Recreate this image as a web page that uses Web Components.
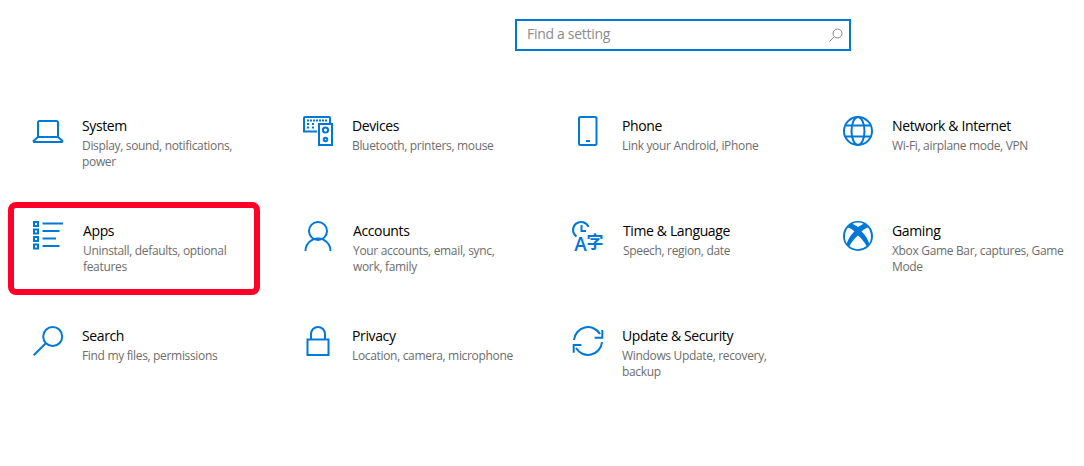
<!DOCTYPE html>
<html lang="en">
<head>
<meta charset="utf-8">
<title>Settings</title>
<style>
  html, body { margin: 0; background: #fff; }
  body { font-family: "Open Sans", "Liberation Sans", sans-serif; }
</style>
</head>
<body>
<settings-page>
  <settings-search slot="search" placeholder="Find a setting"></settings-search>

  <settings-tile name="System" info="Display, sound, notifications,&#10;power">
    <svg viewBox="0 0 30 30" fill="none" stroke="currentColor" stroke-width="2">
      <path d="M5 21V6.500a1.500 1.500 0 0 1 1.500-1.500h17a1.500 1.500 0 0 1 1.500 1.500V21"/>
      <path d="M5 21h20l4 3.500a.8.800 0 0 1-.5 1.500h-27a.8.800 0 0 1-.5-1.500z"/>
    </svg>
  </settings-tile>

  <settings-tile name="Devices" info="Bluetooth, printers, mouse">
    <svg viewBox="0 0 30 30" fill="none" stroke="currentColor" stroke-width="2">
      <path d="M14 15.500H1V2a1 1 0 0 1 1-1h24a1 1 0 0 1 1 1v5"/>
      <path d="M4 4.500h20M4 8h3m2 0h3M4 11.500h3m2 0h3" stroke-dasharray="2 1"/>
      <rect x="16" y="8" width="13" height="21"/>
      <circle cx="22.500" cy="14" r="2.600"/>
      <circle cx="22.500" cy="23.500" r="1.800"/>
    </svg>
  </settings-tile>

  <settings-tile name="Phone" info="Link your Android, iPhone">
    <svg viewBox="0 0 30 30" fill="none" stroke="currentColor" stroke-width="2">
      <rect x="6" y="1" width="17.500" height="28" rx="1.500"/>
      <path d="M13 25h4"/>
    </svg>
  </settings-tile>

  <settings-tile name="Network &amp; Internet" info="Wi-Fi, airplane mode, VPN">
    <svg viewBox="0 0 30 30" fill="none" stroke="currentColor" stroke-width="2">
      <circle cx="15" cy="15" r="14"/>
      <ellipse cx="15" cy="15" rx="6.500" ry="14"/>
      <path d="M3 9.500h24M3 20.500h24"/>
    </svg>
  </settings-tile>

  <settings-tile name="Apps" info="Uninstall, defaults, optional&#10;features" style="--gap: 20px">
    <svg viewBox="0 0 30 30" fill="none" stroke="currentColor" stroke-width="2">
      <path d="M9.500 2.500H30M9.500 10H26.500M9.500 17.500H23M9.500 25H26.500"/>
      <g fill="currentColor" stroke="none">
        <path fill-rule="evenodd" d="M0 0h6v6H0zM2 2v2h2V2z"/>
        <path fill-rule="evenodd" d="M0 7.500h6v6H0zM2 9.500v2h2v-2z"/>
        <path fill-rule="evenodd" d="M0 15h6v6H0zM2 17v2h2v-2z"/>
        <path fill-rule="evenodd" d="M0 22.500h6v6H0zM2 24.500v2h2v-2z"/>
      </g>
    </svg>
  </settings-tile>

  <settings-tile name="Accounts" info="Your accounts, email, sync,&#10;work, family" style="--gap: 20px">
    <svg viewBox="0 0 30 30" fill="none" stroke="currentColor" stroke-width="2">
      <circle cx="15" cy="10" r="9"/>
      <path d="M2.500 30a12.500 12.500 0 0 1 25 0"/>
    </svg>
  </settings-tile>

  <settings-tile name="Time &amp; Language" info="Speech, region, date" style="--gap: 20px">
    <svg viewBox="0 0 30 30" fill="none" stroke="currentColor" stroke-width="2">
      <path d="M3.500 15.500A8 8 0 1 1 15.500 6"/>
      <path d="M8.500 4v6H13"/>
      <text x="7.500" y="30" text-anchor="middle" fill="currentColor" stroke="none" font-family="'Open Sans', sans-serif" font-size="19" font-weight="600">A</text>
      <text x="22" y="27" text-anchor="middle" fill="currentColor" stroke="none" font-family="'Noto Sans CJK SC', sans-serif" font-size="17" font-weight="700">字</text>
    </svg>
  </settings-tile>

  <settings-tile name="Gaming" info="Xbox Game Bar, captures, Game&#10;Mode">
    <svg viewBox="0 0 30 30">
      <circle cx="15" cy="15" r="15" fill="currentColor"/>
      <g fill="#fff">
        <path d="M9.500 2.700a13 13 0 0 1 11 0L15 6z"/>
        <path d="M5 6.500C1.500 11 1 18 3.800 22.500 5 18 8 13.500 11.500 10.500 9.500 8.500 7.500 7.200 5 6.500z"/>
        <path d="M25 6.500C28.500 11 29 18 26.200 22.500 25 18 22 13.500 18.500 10.500 20.500 8.500 22.500 7.200 25 6.500z"/>
        <path d="M6.500 25C9 20.500 12 16.800 15 14.500c3 2.300 6 6 8.500 10.500a13 13 0 0 1-17 0z"/>
      </g>
    </svg>
  </settings-tile>

  <settings-tile name="Search" info="Find my files, permissions">
    <svg viewBox="0 0 30 30" fill="none" stroke="currentColor" stroke-width="2">
      <circle cx="19.700" cy="10.500" r="9.500"/>
      <path d="M12.800 17.200L.7 29.300"/>
    </svg>
  </settings-tile>

  <settings-tile name="Privacy" info="Location, camera, microphone">
    <svg viewBox="0 0 30 30" fill="none" stroke="currentColor" stroke-width="2">
      <rect x="4.500" y="13.500" width="21" height="15.500"/>
      <path d="M8 13.500V8a7 7 0 0 1 14 0v5.500"/>
    </svg>
  </settings-tile>

  <settings-tile name="Update &amp; Security" info="Windows Update, recovery,&#10;backup">
    <svg viewBox="0 0 30 30" fill="none" stroke="currentColor" stroke-width="2">
      <path d="M1 14A14 14 0 0 1 27 8"/>
      <path d="M29.300 4v7.700h-7.700"/>
      <path d="M29 16A14 14 0 0 1 3 22"/>
      <path d="M.7 26.700V19h7.700"/>
    </svg>
  </settings-tile>

  <settings-outline slot="overlay"></settings-outline>
</settings-page>

<script>
class SettingsPage extends HTMLElement {
  constructor() {
    super();
    this.attachShadow({mode: 'open'}).innerHTML = `
      <style>
        :host {
          display: block;
          position: relative;
          height: 466px;
          overflow: hidden;
          color: #000;
        }
        .top {
          display: flex;
          justify-content: flex-start;
          padding: 19px 0 0 515px;
        }
        .grid {
          display: grid;
          grid-template-columns: repeat(4, 270px);
          grid-auto-rows: 105px;
          padding: 65px 0 0 33px;
        }
      </style>
      <div class="top"><slot name="search"></slot></div>
      <div class="grid"><slot></slot></div>
      <slot name="overlay"></slot>
    `;
  }
}

class SettingsSearch extends HTMLElement {
  constructor() {
    super();
    this.attachShadow({mode: 'open'});
  }

  connectedCallback() {
    this.shadowRoot.innerHTML = `
      <style>
        :host {
          display: flex;
          align-items: center;
          justify-content: space-between;
          box-sizing: border-box;
          width: 336px;
          height: 32px;
          padding: 0 6px 0 10px;
          border: 2px solid #0078d7;
          background: #fff;
          color: #8c8c8c;
          font-size: 14px;
          letter-spacing: -0.3px;
        }
        span { padding-bottom: 4px; }
        svg { width: 14px; height: 14px; }
      </style>
      <span>${this.getAttribute('placeholder')}</span>
      <svg viewBox="0 0 14 14" fill="none" stroke="#858585" stroke-width="1">
        <circle cx="8.500" cy="5.500" r="4.500"/>
        <path d="M5.300 8.700L.5 13.500"/>
      </svg>
    `;
  }
}

class SettingsTile extends HTMLElement {
  constructor() {
    super();
    this.attachShadow({mode: 'open'});
  }

  connectedCallback() {
    this.shadowRoot.innerHTML = `
      <style>
        :host {
          display: flex;
          gap: var(--gap, 19px);
          align-items: flex-start;
        }
        .icon {
          flex: none;
          width: 30px;
          height: 30px;
          color: #0078d7;
        }
        ::slotted(svg) { display: block; width: 30px; height: 30px; overflow: visible; }
        .text { width: 180px; }
        .name {
          font-size: 14px;
          line-height: 20px;
          letter-spacing: -0.38px;
          color: #000;
        }
        .info {
          margin-top: 2px;
          font-size: 12px;
          line-height: 16px;
          letter-spacing: -0.33px;
          white-space: pre-line;
          color: #6d6d6d;
        }
      </style>
      <div class="icon"><slot></slot></div>
      <div class="text">
        <div class="name">${this.getAttribute('name').replace('&', '&amp;')}</div>
        <div class="info">${this.getAttribute('info')}</div>
      </div>
    `;
  }
}

class SettingsOutline extends HTMLElement {
  constructor() {
    super();
    this.attachShadow({mode: 'open'}).innerHTML = `
      <style>
        :host {
          position: absolute;
          left: 8px;
          top: 202px;
          box-sizing: border-box;
          width: 252px;
          height: 93px;
          border: 6px solid #ff0029;
          border-radius: 8px;
          pointer-events: none;
        }
      </style>
    `;
  }
}

customElements.define('settings-page', SettingsPage);
customElements.define('settings-search', SettingsSearch);
customElements.define('settings-tile', SettingsTile);
customElements.define('settings-outline', SettingsOutline);
</script>
</body>
</html>
